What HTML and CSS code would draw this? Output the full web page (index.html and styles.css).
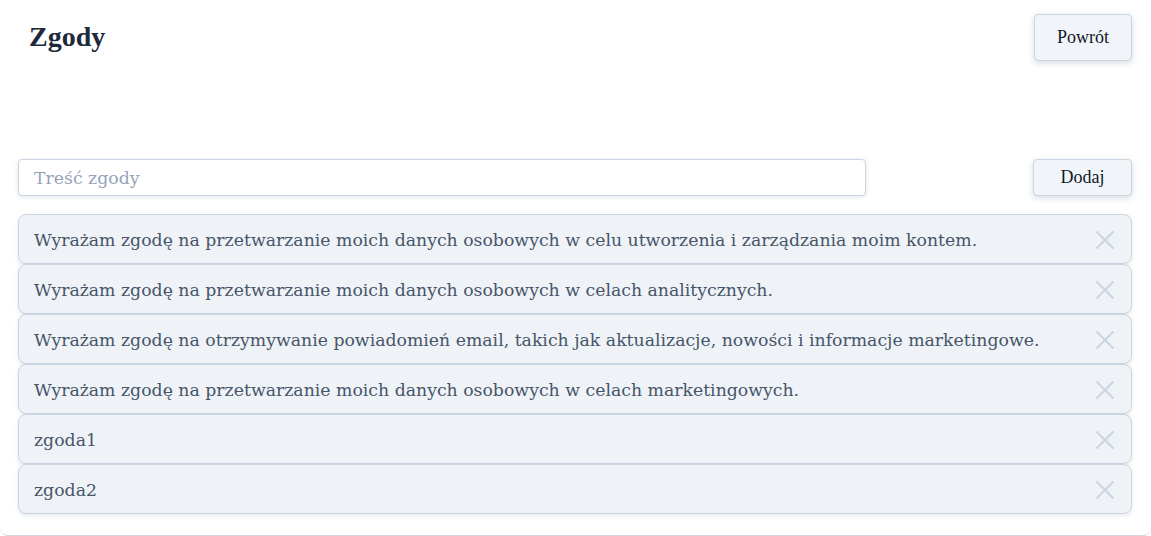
FILE: index.html
```html
<!DOCTYPE html>
<html lang="pl">
<head>
<meta charset="utf-8">
<title>Zgody</title>
<link rel="stylesheet" href="styles.css">
</head>
<body>
<div class="card">
  <header class="head">
    <h1 class="title">Zgody</h1>
    <button class="btn btn-back">Powrót</button>
  </header>
  <form class="add-row">
    <input class="input" type="text" placeholder="Treść zgody">
    <button class="btn btn-add" type="button">Dodaj</button>
  </form>
  <ul class="list">
    <li class="item"><span class="item-text">Wyrażam zgodę na przetwarzanie moich danych osobowych w celu utworzenia i zarządzania moim kontem.</span><button class="remove" aria-label="Usuń"><svg viewBox="0 0 20 20" width="20" height="20"><path d="M1.5 1.5L18.5 18.5M18.5 1.5L1.5 18.5"/></svg></button></li>
    <li class="item"><span class="item-text">Wyrażam zgodę na przetwarzanie moich danych osobowych w celach analitycznych.</span><button class="remove" aria-label="Usuń"><svg viewBox="0 0 20 20" width="20" height="20"><path d="M1.5 1.5L18.5 18.5M18.5 1.5L1.5 18.5"/></svg></button></li>
    <li class="item"><span class="item-text">Wyrażam zgodę na otrzymywanie powiadomień email, takich jak aktualizacje, nowości i informacje marketingowe.</span><button class="remove" aria-label="Usuń"><svg viewBox="0 0 20 20" width="20" height="20"><path d="M1.5 1.5L18.5 18.5M18.5 1.5L1.5 18.5"/></svg></button></li>
    <li class="item"><span class="item-text">Wyrażam zgodę na przetwarzanie moich danych osobowych w celach marketingowych.</span><button class="remove" aria-label="Usuń"><svg viewBox="0 0 20 20" width="20" height="20"><path d="M1.5 1.5L18.5 18.5M18.5 1.5L1.5 18.5"/></svg></button></li>
    <li class="item"><span class="item-text">zgoda1</span><button class="remove" aria-label="Usuń"><svg viewBox="0 0 20 20" width="20" height="20"><path d="M1.5 1.5L18.5 18.5M18.5 1.5L1.5 18.5"/></svg></button></li>
    <li class="item"><span class="item-text">zgoda2</span><button class="remove" aria-label="Usuń"><svg viewBox="0 0 20 20" width="20" height="20"><path d="M1.5 1.5L18.5 18.5M18.5 1.5L1.5 18.5"/></svg></button></li>
  </ul>
</div>
</body>
</html>
```
FILE: styles.css
```css
html, body {
  margin: 0;
  padding: 0;
  background: #ffffff;
}
body {
  font-family: "DejaVu Serif", "Liberation Serif", serif;
  color: #475569;
  overflow: hidden;
}
.card {
  box-sizing: border-box;
  width: 1151px;
  height: 546px;
  margin-top: -10px;
  padding: 24px 19px 0 18px;
  border-bottom: 1px solid #cfd7e1;
  border-radius: 0 0 8px 8px;
  background: #fff;
}
.head {
  display: flex;
  justify-content: space-between;
  align-items: flex-start;
  height: 145px;
}
.title {
  margin: 9px 0 0 11px;
  font-family: "Liberation Serif", serif;
  font-size: 28px;
  font-weight: bold;
  color: #1e293b;
  line-height: 1;
}
.btn {
  font-family: "Liberation Serif", serif;
  font-size: 18px;
  color: #111827;
  background: #f1f5f9;
  border: 1px solid #cbd5e1;
  border-radius: 4px;
  box-shadow: 0 2px 6px rgba(100, 116, 139, 0.25);
  cursor: pointer;
}
.btn-back {
  width: 98px;
  height: 47px;
}
.add-row {
  display: flex;
  justify-content: space-between;
  align-items: center;
  margin: 0 0 18px 0;
}
.input {
  box-sizing: border-box;
  width: 848px;
  height: 37px;
  padding: 0 15px;
  font-family: "DejaVu Serif", serif;
  font-size: 17.3px;
  color: #475569;
  border: 1px solid #cbd5e1;
  border-radius: 4px;
  box-shadow: 0 1px 4px rgba(100, 116, 139, 0.2);
  outline: none;
}
.input::placeholder {
  color: #94a3b8;
}
.btn-add {
  width: 99px;
  height: 37px;
}
.list {
  list-style: none;
  margin: 0;
  padding: 0;
}
.item {
  box-sizing: border-box;
  display: flex;
  align-items: center;
  justify-content: space-between;
  height: 50px;
  padding: 2px 16px 0 15px;
  background: #eff3f8;
  border: 1px solid #cbd5e1;
  border-radius: 8px;
  box-shadow: 0 2px 4px rgba(100, 116, 139, 0.15);
  font-size: 17.3px;
  color: #475569;
}
.remove {
  display: flex;
  padding: 0;
  border: 0;
  background: none;
  cursor: pointer;
}
.remove svg {
  width: 20px;
  height: 20px;
  fill: none;
  stroke: #cbd5e1;
  stroke-width: 2;
}
```
